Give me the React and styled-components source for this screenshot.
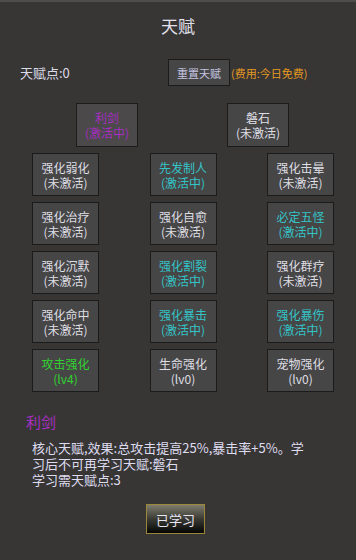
import React from "react";
import styled, { createGlobalStyle } from "styled-components";

const Global = createGlobalStyle`
  html, body { margin: 0; padding: 0; background: #383634; }
  body { font-family: "Noto Sans CJK SC", "Noto Sans", sans-serif; }
`;

const Page = styled.div`
  width: 356px;
  height: 560px;
  box-sizing: border-box;
  background: #383634;
  border-top: 2px solid #4e4d4c;
  display: flex;
  flex-direction: column;
  overflow: hidden;
`;

const Title = styled.div`
  margin-top: 12px;
  height: 24px;
  line-height: 24px;
  text-align: center;
  font-size: 17px;
  color: #e2e2ee;
`;

const HeaderRow = styled.div`
  margin-top: 21px;
  height: 27px;
  display: flex;
  align-items: center;
  padding-left: 20px;
`;

const Points = styled.div`
  width: 148px;
  font-size: 13px;
  color: #dcdce8;
`;

const ResetButton = styled.div`
  box-sizing: border-box;
  width: 62px;
  height: 27px;
  background: #474646;
  border: 1.5px solid #1b1b1b;
  display: flex;
  align-items: center;
  justify-content: center;
  font-size: 11px;
  color: #c4c4e2;
`;

const Cost = styled.div`
  margin-left: 1px;
  font-size: 11px;
  color: #e69a22;
`;

const CoreRow = styled.div`
  margin-top: 17px;
  display: flex;
  padding-left: 76px;
  gap: 89px;
`;

const Grid = styled.div`
  margin-top: 6px;
  padding-left: 32px;
  display: grid;
  grid-template-columns: 67px 67px 67px;
  grid-auto-rows: 43px;
  column-gap: 50.5px;
  row-gap: 6px;
`;

const colors = {
  off: "#dedee4",
  on: "#33c4c8",
  lv: "#2fd22f",
  core: "#a62ec0",
};

const Box = styled.div`
  box-sizing: border-box;
  width: ${(p) => (p.$core ? "62px" : "67px")};
  height: ${(p) => (p.$core ? "44px" : "43px")};
  background: ${(p) => (p.$selected ? "#4b4949" : "#474646")};
  border: 1.5px solid #1b1b1b;
  display: flex;
  flex-direction: column;
  align-items: center;
  justify-content: center;
  font-size: 12px;
  line-height: 15px;
  color: ${(p) => colors[p.$tone]};
  text-align: center;
`;

const DetailName = styled.div`
  margin-top: 20px;
  padding-left: 26px;
  height: 20px;
  line-height: 20px;
  font-size: 15px;
  color: #a62ec0;
`;

const Desc = styled.div`
  margin-top: 8px;
  padding-left: 32px;
  font-size: 13px;
  line-height: 16px;
  color: #dedcf0;
`;

const Line = styled.div`
  white-space: nowrap;
`;

const LearnRow = styled.div`
  margin-top: 16px;
  display: flex;
  justify-content: center;
  padding-right: 5px;
`;

const LearnButton = styled.div`
  box-sizing: border-box;
  width: 59px;
  height: 30px;
  border: 1px solid #9a8838;
  background: linear-gradient(to bottom, #7e7c6c 0%, #3a3a34 50%, #050505 100%);
  display: flex;
  align-items: center;
  justify-content: center;
  font-size: 13px;
  color: #e6e6f2;
`;

const core = [
  { name: "利剑", state: "(激活中)", tone: "core", selected: true },
  { name: "磐石", state: "(未激活)", tone: "off" },
];

const talents = [
  ["强化弱化", "(未激活)", "off"],
  ["先发制人", "(激活中)", "on"],
  ["强化击晕", "(未激活)", "off"],
  ["强化治疗", "(未激活)", "off"],
  ["强化自愈", "(未激活)", "off"],
  ["必定五怪", "(激活中)", "on"],
  ["强化沉默", "(未激活)", "off"],
  ["强化割裂", "(激活中)", "on"],
  ["强化群疗", "(未激活)", "off"],
  ["强化命中", "(未激活)", "off"],
  ["强化暴击", "(激活中)", "on"],
  ["强化暴伤", "(激活中)", "on"],
  ["攻击强化", "(lv4)", "lv"],
  ["生命强化", "(lv0)", "off"],
  ["宠物强化", "(lv0)", "off"],
];

export default function App() {
  return (
    <>
      <Global />
      <Page>
        <Title>天赋</Title>
        <HeaderRow>
          <Points>天赋点:0</Points>
          <ResetButton>重置天赋</ResetButton>
          <Cost>(费用:今日免费)</Cost>
        </HeaderRow>
        <CoreRow>
          {core.map((c) => (
            <Box key={c.name} $core $tone={c.tone} $selected={c.selected}>
              <div>{c.name}</div>
              <div>{c.state}</div>
            </Box>
          ))}
        </CoreRow>
        <Grid>
          {talents.map(([n, s, t]) => (
            <Box key={n} $tone={t}>
              <div>{n}</div>
              <div>{s}</div>
            </Box>
          ))}
        </Grid>
        <DetailName>利剑</DetailName>
        <Desc>
          <Line>核心天赋,效果:总攻击提高25%,暴击率+5%。学</Line>
          <Line>习后不可再学习天赋:磐石</Line>
          <Line>学习需天赋点:3</Line>
        </Desc>
        <LearnRow>
          <LearnButton>已学习</LearnButton>
        </LearnRow>
      </Page>
    </>
  );
}
